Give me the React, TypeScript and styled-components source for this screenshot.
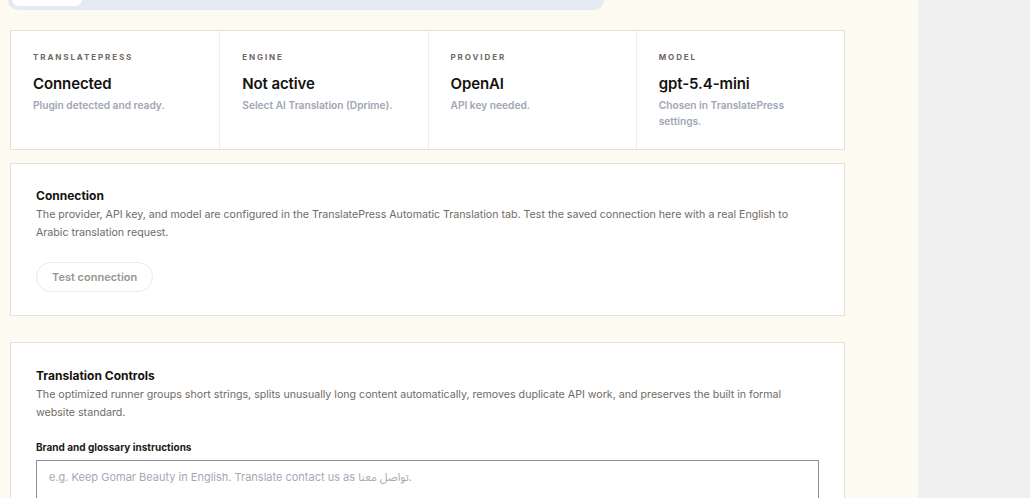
import React from "react";
import styled, { createGlobalStyle } from "styled-components";

const GlobalStyle = createGlobalStyle`
  html, body {
    margin: 0;
    padding: 0;
    background: #f0f0f1;
    font-family: Inter, "Noto Sans", "Noto Sans Arabic", "DejaVu Sans", sans-serif;
    color: #1d1b18;
  }
  * { box-sizing: border-box; }
`;

const Layout = styled.div`
  display: flex;
  height: 498px;
  overflow: hidden;
`;

const Main = styled.main`
  width: 918px;
  flex-shrink: 0;
  background: #fdfaf2;
  padding: 0 73px 0 10px;
`;

const Aside = styled.div`
  flex: 1;
  background: #f0f0f1;
`;

const TabBar = styled.div`
  display: flex;
  align-items: flex-end;
  margin: -22px 0 0 -2px;
  width: 596px;
  height: 32px;
  padding: 0 4px 4px;
  background: #e4eaf2;
  border-radius: 10px;
`;

const Tab = styled.div<{ active?: boolean }>`
  width: 70px;
  height: 24px;
  border-radius: 7px;
  background: ${(p) => (p.active ? "#ffffff" : "transparent")};
`;

const Card = styled.section<{ gap?: number }>`
  background: #ffffff;
  border: 1px solid #e6e1d8;
  margin-top: ${(p) => p.gap ?? 0}px;
`;

const StatGrid = styled.div`
  display: grid;
  grid-template-columns: repeat(4, 1fr);
  height: 118px;
`;

const Stat = styled.div`
  padding: 21px 22px 0;
  border-left: 1px solid #f1eee9;
  &:first-child {
    border-left: none;
  }
`;

const StatLabel = styled.div`
  font-size: 8px;
  font-weight: 700;
  letter-spacing: 1.9px;
  text-transform: uppercase;
  color: #6e6862;
`;

const StatValue = styled.div`
  margin-top: 12px;
  font-size: 15px;
  font-weight: 600;
  letter-spacing: -0.1px;
  color: #14120f;
`;

const StatNote = styled.div`
  margin-top: 4px;
  font-size: 10.2px;
  font-weight: 600;
  line-height: 16px;
  color: #a0a6b4;
  max-width: 160px;
`;

const CardBody = styled.div<{ pt: number; pb: number }>`
  padding: ${(p) => p.pt}px 25px ${(p) => p.pb}px 25px;
`;

const CardTitle = styled.h3`
  margin: 0;
  font-size: 12px;
  font-weight: 700;
  color: #14120f;
`;

const CardText = styled.p`
  margin: 3px 0 0;
  font-size: 10.65px;
  line-height: 18px;
  color: #706b66;
  max-width: 766px;
`;

const GhostButton = styled.button`
  margin-top: 20px;
  height: 30px;
  padding: 0 15px;
  border: 1px solid #eeeae4;
  border-radius: 15px;
  background: #ffffff;
  font-family: inherit;
  font-size: 11px;
  font-weight: 600;
  color: #9a958f;
`;

const FieldLabel = styled.label`
  display: block;
  margin-top: 19px;
  font-size: 10px;
  font-weight: 700;
  color: #1d1b18;
`;

const TextArea = styled.textarea`
  display: block;
  width: 783px;
  height: 60px;
  margin-top: 7px;
  padding: 5px 12px;
  border: 1px solid #8c8f94;
  border-radius: 0;
  resize: none;
  font-family: inherit;
  font-size: 11px;
  &::placeholder {
    color: #a3a9b6;
  }
`;

const stats = [
  { label: "TranslatePress", value: "Connected", note: "Plugin detected and ready." },
  { label: "Engine", value: "Not active", note: "Select AI Translation (Dprime)." },
  { label: "Provider", value: "OpenAI", note: "API key needed." },
  { label: "Model", value: "gpt-5.4-mini", note: "Chosen in TranslatePress settings." },
];

export default function App() {
  return (
    <>
      <GlobalStyle />
      <Layout>
        <Main>
          <TabBar>
            <Tab active />
          </TabBar>

          <Card gap={20}>
            <StatGrid>
              {stats.map((s) => (
                <Stat key={s.label}>
                  <StatLabel>{s.label}</StatLabel>
                  <StatValue>{s.value}</StatValue>
                  <StatNote>{s.note}</StatNote>
                </Stat>
              ))}
            </StatGrid>
          </Card>

          <Card gap={13}>
            <CardBody pt={24} pb={23}>
              <CardTitle>Connection</CardTitle>
              <CardText>
                The provider, API key, and model are configured in the TranslatePress Automatic
                Translation tab. Test the saved connection here with a real English to Arabic
                translation request.
              </CardText>
              <GhostButton>Test connection</GhostButton>
            </CardBody>
          </Card>

          <Card gap={26}>
            <CardBody pt={25} pb={24}>
              <CardTitle>Translation Controls</CardTitle>
              <CardText>
                The optimized runner groups short strings, splits unusually long content
                automatically, removes duplicate API work, and preserves the built in formal
                website standard.
              </CardText>
              <FieldLabel>Brand and glossary instructions</FieldLabel>
              <TextArea placeholder="e.g. Keep Gomar Beauty in English. Translate contact us as تواصل معنا." />
            </CardBody>
          </Card>
        </Main>
        <Aside />
      </Layout>
    </>
  );
}
